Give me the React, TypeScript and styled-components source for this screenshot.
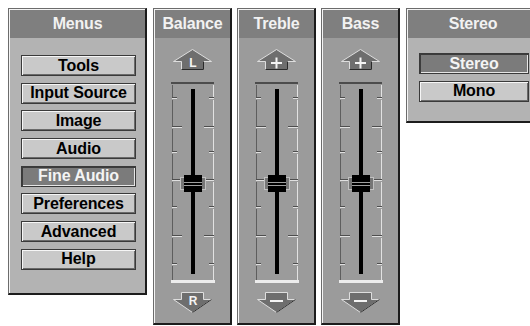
import React from "react";
import styled, { createGlobalStyle } from "styled-components";

const GlobalStyle = createGlobalStyle`
  html, body {
    margin: 0;
    padding: 0;
    background: #ffffff;
    overflow: hidden;
  }
  body {
    font-family: "Liberation Sans", Arial, Helvetica, sans-serif;
  }
`;

const Desk = styled.div`
  display: flex;
  flex-direction: row;
  align-items: flex-start;
  padding: 8px 0 0 8px;
  width: 530px;
  height: 326px;
  overflow: hidden;
  box-sizing: border-box;
`;

const Panel = styled.div<{ $w: number; $h: number; $body: string; $gap?: number }>`
  flex: 0 0 auto;
  box-sizing: border-box;
  width: ${({ $w }) => $w}px;
  height: ${({ $h }) => $h}px;
  margin-right: ${({ $gap }) => $gap ?? 0}px;
  display: flex;
  flex-direction: column;
  background: ${({ $body }) => $body};
  border-style: solid;
  border-width: 1px 2px 2px 1px;
  border-color: #6c6c6c #1c1c1c #1c1c1c #6c6c6c;
  box-shadow: inset 1px 1px 0 #f4f4f4;
  padding: 1px 0 0 1px;
`;

const Header = styled.div`
  height: 28px;
  flex: 0 0 28px;
  background: #7f7f7f;
  color: #f2f2f2;
  font-size: 16px;
  font-weight: bold;
  display: flex;
  align-items: center;
  justify-content: center;
  letter-spacing: -0.2px;
`;

const ButtonList = styled.div<{ $top: number }>`
  display: flex;
  flex-direction: column;
  gap: 6.7px;
  padding: ${({ $top }) => $top}px 9px 0 11px;
`;

const MenuButton = styled.div<{ $active?: boolean }>`
  box-sizing: border-box;
  height: 21px;
  display: flex;
  align-items: center;
  justify-content: center;
  font-size: 16px;
  font-weight: bold;
  letter-spacing: -0.1px;
  border: 1px solid #3a3a3a;
  background: ${({ $active }) => ($active ? "#7b7b7b" : "#c9c9c9")};
  color: ${({ $active }) => ($active ? "#f4f4f4" : "#000000")};
  box-shadow: ${({ $active }) =>
    $active
      ? "inset 1px 1px 0 #3c3c3c, inset -1px -1px 0 #e6e6e6"
      : "inset 1px 1px 0 #f6f6f6, inset -1px -1px 0 #6a6a6a"};
`;

const SliderBody = styled.div`
  display: flex;
  flex-direction: column;
  align-items: center;
  padding-top: 11px;
`;

const ArrowSvg = styled.svg`
  display: block;
  flex: 0 0 auto;
`;

const TrackSvg = styled.svg`
  display: block;
  margin: 11px 0 8px 0;
`;

type Mark = "L" | "R" | "+" | "-";

function Arrow({ dir, mark }: { dir: "up" | "down"; mark: Mark }) {
  const up = dir === "up";
  const pts = up
    ? "19.5,0.5 38.5,12.5 30.5,12.5 30.5,20.5 8.5,20.5 8.5,12.5 0.5,12.5"
    : "8.5,0.5 30.5,0.5 30.5,7.5 38.5,7.5 19.5,20.5 0.5,7.5 8.5,7.5";
  return (
    <ArrowSvg width={40} height={22} viewBox="0 0 40 22">
      <polygon points={pts} fill="#6e6e6e" stroke="#dedede" strokeWidth={1} />
      {up ? (
        <polyline points="30.5,12.5 30.5,20.5 8.5,20.5" fill="none" stroke="#2a2a2a" strokeWidth={1} />
      ) : (
        <polyline points="38.5,7.5 19.5,20.5" fill="none" stroke="#2a2a2a" strokeWidth={1} />
      )}
      {mark === "-" ? (
        <rect x={13} y={up ? 14 : 8} width={13} height={2} fill="#f4f4f4" />
      ) : mark === "+" ? (
        <g fill="#f4f4f4">
          <rect x={14} y={13} width={11} height={2} />
          <rect x={18.5} y={8.5} width={2} height={11} />
        </g>
      ) : (
        <text
          x={20}
          y={up ? 18 : 13}
          textAnchor="middle"
          fontSize={12}
          fontWeight="bold"
          fill="#f4f4f4"
          fontFamily="Liberation Sans, Arial, sans-serif"
        >
          {mark}
        </text>
      )}
    </ArrowSvg>
  );
}

const ticks = [15, 44, 69, 97, 124, 153, 181];

function Track() {
  return (
    <TrackSvg width={44} height={202} viewBox="0 0 44 202">
      <rect x={0} y={0} width={43} height={2} fill="#4c4c4c" />
      {ticks.map((t, i) => {
        const long = i % 2 === 1;
        const prev = i === 0 ? 3 : ticks[i - 1] + 3;
        const len = long ? 10 : 5;
        return (
          <g key={t}>
            <rect x={1} y={prev} width={1} height={t - prev} fill="#5e5e5e" />
            <rect x={42} y={prev} width={1} height={t - prev} fill="#e2e2e2" />
            <rect x={1} y={t} width={len} height={1} fill="#4e4e4e" />
            <rect x={1} y={t + 1} width={len} height={1} fill="#e0e0e0" />
            <rect x={43 - len} y={t} width={len} height={1} fill="#4e4e4e" />
            <rect x={43 - len} y={t + 1} width={len} height={1} fill="#e0e0e0" />
          </g>
        );
      })}
      <rect x={1} y={184} width={1} height={14} fill="#5e5e5e" />
      <rect x={42} y={184} width={1} height={14} fill="#e2e2e2" />
      <rect x={20} y={7} width={4} height={185} fill="#000000" />
      <rect x={0} y={198} width={44} height={3} fill="#ececec" />
      <rect x={9} y={95} width={26} height={13} fill="#c0c0c0" />
      <rect x={10} y={96} width={24} height={11} fill="#767676" />
      <rect x={13} y={93} width={18} height={17} fill="#000000" />
      <rect x={13} y={100} width={18} height={1} fill="#a0a0a0" />
      <rect x={13} y={103} width={18} height={1} fill="#a0a0a0" />
    </TrackSvg>
  );
}

const menuItems = [
  "Tools",
  "Input Source",
  "Image",
  "Audio",
  "Fine Audio",
  "Preferences",
  "Advanced",
  "Help",
];

const sliders: { title: string; up: Mark; down: Mark; gap: number }[] = [
  { title: "Balance", up: "L", down: "R", gap: 5 },
  { title: "Treble", up: "+", down: "-", gap: 5 },
  { title: "Bass", up: "+", down: "-", gap: 6 },
];

export default function App() {
  return (
    <>
      <GlobalStyle />
      <Desk>
        <Panel $w={139} $h={287} $body="#b3b3b3" $gap={6}>
          <Header>Menus</Header>
          <ButtonList $top={17}>
            {menuItems.map((m) => (
              <MenuButton key={m} $active={m === "Fine Audio"}>
                {m}
              </MenuButton>
            ))}
          </ButtonList>
        </Panel>
        {sliders.map((s) => (
          <Panel key={s.title} $w={79} $h={317} $body="#9b9b9b" $gap={s.gap}>
            <Header>{s.title}</Header>
            <SliderBody>
              <Arrow dir="up" mark={s.up} />
              <Track />
              <Arrow dir="down" mark={s.down} />
            </SliderBody>
          </Panel>
        ))}
        <Panel $w={134} $h={115} $body="#b3b3b3">
          <Header>Stereo</Header>
          <ButtonList $top={15}>
            <MenuButton $active>Stereo</MenuButton>
            <MenuButton>Mono</MenuButton>
          </ButtonList>
        </Panel>
      </Desk>
    </>
  );
}
